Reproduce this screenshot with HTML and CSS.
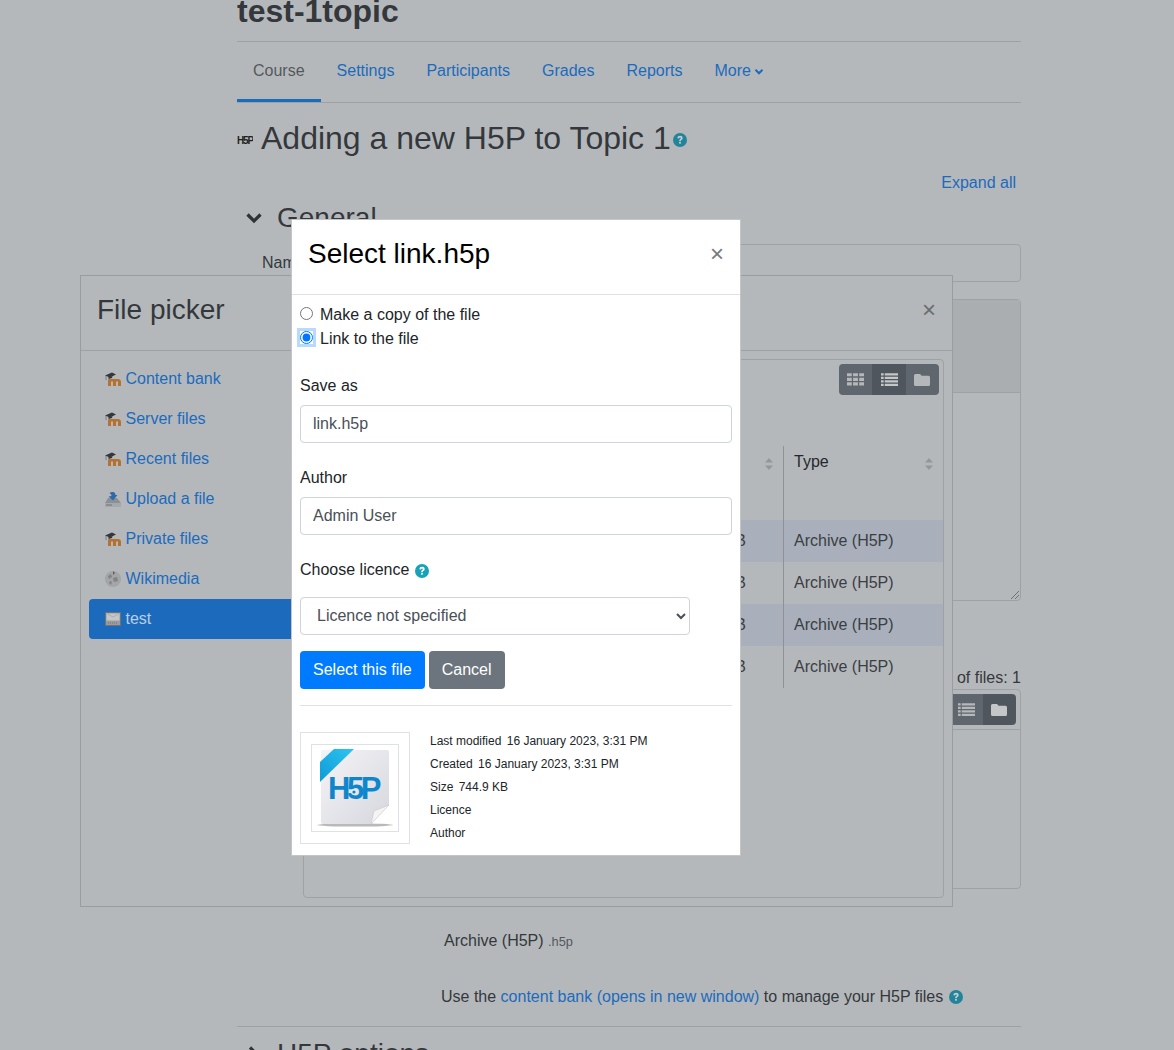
FILE: index.html
```html
<!DOCTYPE html>
<html>
  <head>
    <title>Adding a new H5P to Topic 1</title>
    <meta name="viewport" content="width=device-width, initial-scale=1" />
    <link rel="stylesheet" href="styles.css">
  </head>
  <body>
    <svg class="defs" width="0" height="0">
      <symbol id="moodle" viewBox="0 0 16 16">
        <path d="M0 4.5 L7 1.5 L11 3.6 L5 6.4 Z" fill="#33363a"/>
        <path d="M1 5 V9" stroke="#6d7074" stroke-width=".8"/>
        <path d="M3.5 6 V8 L7 7 L7.5 5.4 Z" fill="#33363a"/>
        <path d="M3 15 V9 Q3 8 5 8 H12.5 Q16 8 16 11 V15 H13 V10.5 H11 V15 H8 V10.5 H6 V15 Z" fill="#b5712f"/>
      </symbol>
      <symbol id="help" viewBox="0 0 16 16">
        <circle cx="8" cy="8" r="8" fill="currentColor"/>
        <path d="M4.9 6 Q5.1 3.2 8.1 3.2 Q11.1 3.2 11.1 5.7 Q11.1 7.2 9.6 8 Q9 8.4 9 9.2 H7 Q7 7.7 8 7 Q9 6.3 9 5.8 Q9 5 8 5 Q7.1 5 6.9 6.2 Z" fill="var(--q)"/>
        <rect x="7" y="10" width="2" height="2.2" fill="var(--q)"/>
      </symbol>
      <symbol id="grid" viewBox="0 0 16 14">
        <path d="M0 1h4.5v3H0zM5.7 1h4.6v3H5.7zM11.5 1H16v3h-4.5zM0 5.3h4.5v3H0zM5.7 5.3h4.6v3H5.7zM11.5 5.3H16v3h-4.5zM0 9.6h4.5v3H0zM5.7 9.6h4.6v3H5.7zM11.5 9.6H16v3h-4.5z" fill="currentColor"/>
      </symbol>
      <symbol id="list" viewBox="0 0 16 14">
        <path d="M0 1h2.5v2.2H0zM3.5 1H16v2.2H3.5zM0 4.3h2.5v2.2H0zM3.5 4.3H16v2.2H3.5zM0 7.6h2.5v2.2H0zM3.5 7.6H16v2.2H3.5zM0 10.9h2.5v2.2H0zM3.5 10.9H16v2.2H3.5z" fill="currentColor"/>
      </symbol>
      <symbol id="folder" viewBox="0 0 16 14">
        <path d="M1.5 1H6l1.6 1.8h6.9Q16 2.8 16 4.3v7.2Q16 13 14.5 13h-13Q0 13 0 11.5v-9Q0 1 1.5 1Z" fill="currentColor"/>
      </symbol>
      <symbol id="sort" viewBox="0 0 8 12">
        <path d="M4 0 L8 4.6 H0 Z M4 12 L0 7.4 H8 Z" fill="currentColor"/>
      </symbol>
    </svg>

    <div class="page">
      <h1 class="course-title">test-1topic</h1>
      <nav class="tabs">
        <a class="tab active">Course</a>
        <a class="tab">Settings</a>
        <a class="tab">Participants</a>
        <a class="tab">Grades</a>
        <a class="tab">Reports</a>
        <a class="tab">More <svg class="caret" viewBox="0 0 10 8" width="10" height="8"><path d="M1.5 1.8 L5 5.3 L8.5 1.8" fill="none" stroke="currentColor" stroke-width="2"/></svg></a>
      </nav>
      <div class="page-heading">
        <svg class="h5p-mini" width="16" height="12" viewBox="0 0 16 12"><text x="0" y="10">H5P</text></svg>
        <h2>Adding a new H5P to Topic 1</h2>
        <svg class="help teal" width="14" height="14"><use href="#help"/></svg>
      </div>
      <div class="expand-all"><a>Expand all</a></div>
      <div class="section-head">
        <svg width="18" height="12" viewBox="0 0 18 12"><path d="M2.5 2.5 L9 9 L15.5 2.5" fill="none" stroke="#2f3337" stroke-width="3.2"/></svg>
        <h3>General</h3>
      </div>
      <div class="name-row">
        <span class="name-label">Name</span>
        <div class="name-field"></div>
      </div>
      <div class="editor-box">
        <div class="editor-top"></div>
        <svg class="resize" width="10" height="10" viewBox="0 0 10 10"><path d="M1 9 L9 1 M5 9 L9 5" stroke="#6d7074" stroke-width="1"/></svg>
      </div>
      <div class="files-count">Maximum number of files: 1</div>
      <div class="manager-box">
        <div class="manager-top">
          <div class="btn-group">
            <span class="view-btn"><svg width="17" height="15"><use href="#grid"/></svg></span>
            <span class="view-btn"><svg width="17" height="15"><use href="#list"/></svg></span>
            <span class="view-btn on"><svg width="16" height="14"><use href="#folder"/></svg></span>
          </div>
        </div>
      </div>
      <div class="types-label">Accepted file types:</div>
      <div class="accepted">Archive (H5P) <small>.h5p</small></div>
      <div class="bank-note">
        <span>Use the <a>content bank (opens in new window)</a> to manage your H5P files</span>
        <svg class="help teal" width="14" height="14"><use href="#help"/></svg>
      </div>
      <div class="section-head closed">
        <svg width="18" height="18" viewBox="0 0 18 18"><path d="M5 2.5 L11.5 9 L5 15.5" fill="none" stroke="#2f3337" stroke-width="3.2"/></svg>
        <h3>H5P options</h3>
      </div>
    </div>

    <div class="picker">
      <div class="picker-head">
        <h4>File picker</h4>
        <span class="close dim">&times;</span>
      </div>
      <div class="picker-body">
        <ul class="repos">
          <li><svg width="16" height="16"><use href="#moodle"/></svg><a>Content bank</a></li>
          <li><svg width="16" height="16"><use href="#moodle"/></svg><a>Server files</a></li>
          <li><svg width="16" height="16"><use href="#moodle"/></svg><a>Recent files</a></li>
          <li>
            <svg width="16" height="16" viewBox="0 0 16 16">
              <path d="M3 7 H12 L16 12 V16 H0 V12 Z" fill="#8b9096"/>
              <path d="M0 12 H16 V16 H0 Z" fill="#a6a9ac"/>
              <path d="M1 14 H7" stroke="#6f7275"/>
              <path d="M4.5 2 Q6 .5 8.5 1 Q10.5 1.5 10.5 4 L12.5 4 L8 9.5 L3.5 5.5 L6.5 5 Q6.5 3 4.5 2 Z" fill="#2f6aa8"/>
            </svg><a>Upload a file</a>
          </li>
          <li><svg width="16" height="16"><use href="#moodle"/></svg><a>Private files</a></li>
          <li>
            <svg width="16" height="16" viewBox="0 0 16 16">
              <circle cx="8" cy="8" r="8" fill="#a3a5a7"/>
              <path d="M3 5 L6 3 L7 6 L4 8 Z M8 7 L12 6 L13 10 L9 11 Z M5 10 L7 11 L6 14 L4 12 Z" fill="#818386"/>
              <path d="M8 0 L10 2 L8 4 Z" fill="#5d6063"/>
            </svg><a>Wikimedia</a>
          </li>
          <li class="active">
            <svg width="16" height="16" viewBox="0 0 16 16">
              <rect x=".5" y="1.5" width="15" height="13" fill="#9a9da0" stroke="#6f7275"/>
              <rect x="1.5" y="2.5" width="13" height="7" fill="#c4c6c8"/>
              <path d="M1.5 2.5 L8 6 L14.5 2.5" fill="none" stroke="#adb0b2"/>
              <path d="M3 12 H13" stroke="#6f7275" stroke-dasharray="1 1"/>
            </svg><a>test</a>
          </li>
        </ul>
        <div class="file-panel">
          <div class="panel-top">
            <div class="btn-group">
              <span class="view-btn"><svg width="17" height="15"><use href="#grid"/></svg></span>
              <span class="view-btn on"><svg width="17" height="15"><use href="#list"/></svg></span>
              <span class="view-btn"><svg width="16" height="14"><use href="#folder"/></svg></span>
            </div>
          </div>
          <table class="files">
            <thead>
              <tr>
                <th class="col-name">Name</th>
                <th class="col-size">Size<svg class="sort" width="8" height="12"><use href="#sort"/></svg></th>
                <th class="col-type">Type<svg class="sort" width="8" height="12"><use href="#sort"/></svg></th>
              </tr>
            </thead>
            <tbody>
              <tr class="odd"><td>link.h5p</td><td>744.9 KB</td><td class="col-type">Archive (H5P)</td></tr>
              <tr><td>quiz.h5p</td><td>744.9 KB</td><td class="col-type">Archive (H5P)</td></tr>
              <tr class="odd"><td>course.h5p</td><td>744.9 KB</td><td class="col-type">Archive (H5P)</td></tr>
              <tr><td>video.h5p</td><td>744.9 KB</td><td class="col-type">Archive (H5P)</td></tr>
            </tbody>
          </table>
        </div>
      </div>
    </div>

    <div class="dialog">
      <div class="dialog-head">
        <h4>Select link.h5p</h4>
        <span class="close">&times;</span>
      </div>
      <div class="dialog-body">
        <label class="radio-line"><input type="radio" name="mode"> Make a copy of the file</label>
        <label class="radio-line focus"><input type="radio" name="mode" checked> Link to the file</label>
        <label class="field-label first">Save as</label>
        <input class="text-input" type="text" value="link.h5p">
        <label class="field-label">Author</label>
        <input class="text-input" type="text" value="Admin User">
        <label class="field-label licence">Choose licence
          <svg class="help teal-bright" width="14" height="14"><use href="#help"/></svg>
        </label>
        <select class="licence-select"><option>Licence not specified</option></select>
        <div class="actions">
          <button class="btn primary">Select this file</button>
          <button class="btn secondary">Cancel</button>
        </div>
        <div class="preview">
          <div class="thumb">
            <div class="thumb-inner">
              <svg width="86" height="86" viewBox="0 0 86 86">
                <defs>
                  <linearGradient id="sheet" x1="0" y1="0" x2="1" y2="1">
                    <stop offset="0" stop-color="#f4f4f8"/>
                    <stop offset="1" stop-color="#d6d7dd"/>
                  </linearGradient>
                  <linearGradient id="ribbon" x1="0" y1="1" x2="1" y2="0">
                    <stop offset="0" stop-color="#0f9ad6"/>
                    <stop offset="1" stop-color="#2cc5f2"/>
                  </linearGradient>
                </defs>
                <ellipse cx="43" cy="80" rx="38" ry="1.6" fill="#b9b9b9"/>
                <path d="M11 5 H75 Q77 5 77 7 V60 L59 79 H11 Q9 79 9 77 V7 Q9 5 11 5 Z" fill="url(#sheet)"/>
                <path d="M8 17 L22 4 H42 L8 37 Z" fill="url(#ribbon)"/>
                <text class="h5p-logo" x="16" y="54">H5P</text>
                <circle cx="42" cy="47" r="3" fill="#e9e9ee"/>
                <circle cx="42" cy="47" r="1.6" fill="#0f86cb"/>
                <path d="M59 79 L62 66 L77 60 Z" fill="#f4f4f4" stroke="#c9cacc" stroke-width=".6"/>
              </svg>
            </div>
          </div>
          <div class="details">
            <div><span>Last modified</span> 16 January 2023, 3:31 PM</div>
            <div><span>Created</span> 16 January 2023, 3:31 PM</div>
            <div><span>Size</span> 744.9 KB</div>
            <div><span>Licence</span></div>
            <div><span>Author</span></div>
          </div>
        </div>
      </div>
    </div>
  </body>
</html>
```

FILE: styles.css
```css
html,
body {
  margin: 0;
  height: 1050px;
  overflow: hidden;
}
body {
  position: relative;
  font-family: "Liberation Sans", Arial, sans-serif;
  font-size: 16px;
  line-height: 24px;
  background-color: #b5b8bb;
  color: #34383c;
}
a {
  color: #1b6bbd;
}
h1,
h2,
h3,
h4 {
  margin: 0;
  font-weight: normal;
}
.defs {
  position: absolute;
}

/* page behind the dialogs */
.page {
  width: 784px;
  margin-left: 237px;
}
.course-title {
  height: 50px;
  margin-top: -8px;
  box-sizing: border-box;
  font-size: 32px;
  line-height: 38px;
  font-weight: bold;
  border-bottom: 1px solid #9fa2a5;
}
.tabs {
  display: flex;
  height: 60px;
  border-bottom: 1px solid #9fa2a5;
}
.tab {
  padding: 17px 16px 0;
  height: 43px;
}
.tab.active {
  color: #53585d;
  border-bottom: 3px solid #1b6bbd;
  height: 40px;
}
.caret {
  vertical-align: 0;
  margin-left: -1px;
}
.page-heading {
  display: flex;
  align-items: center;
  height: 38px;
  margin-top: 16px;
}
.h5p-mini {
  margin-right: 8px;
  margin-top: 4px;
}
.h5p-mini text {
  font-size: 10px;
  font-weight: bold;
  letter-spacing: -1.2px;
  fill: #1d1f21;
}
.page-heading h2 {
  font-size: 32px;
  line-height: 38px;
}
.help {
  flex: none;
  --q: #c3cdd0;
}
.teal {
  color: #22849a;
}
.page-heading .help {
  margin: 4px 0 0 2px;
}
.expand-all {
  text-align: right;
  padding-right: 5px;
  margin-top: 14px;
}
.section-head {
  display: flex;
  align-items: center;
  height: 34px;
  margin-top: 6px;
  padding-left: 8px;
}
.section-head h3 {
  font-size: 28px;
  line-height: 34px;
  margin-left: 14px;
}
.name-row {
  display: flex;
  align-items: center;
  margin-top: 9px;
  padding-left: 25px;
  height: 38px;
}
.name-field {
  margin-left: 150px;
  flex: 1;
  height: 36px;
  border: 1px solid #9fa2a5;
  border-radius: 4px;
}
.editor-box {
  position: relative;
  height: 300px;
  margin: 17px 0 0 213px;
  border: 1px solid #9fa2a5;
  border-radius: 4px;
}
.editor-top {
  height: 92px;
  background-color: #abaeb1;
  border-bottom: 1px solid #9fa2a5;
}
.resize {
  position: absolute;
  right: 0;
  bottom: 0;
}
.files-count {
  text-align: right;
  margin-top: 65px;
  height: 23px;
}
.manager-box {
  height: 198px;
  margin: 0 0 0 213px;
  border: 1px solid #9fa2a5;
  border-radius: 4px;
}
.manager-top {
  display: flex;
  justify-content: flex-end;
  padding: 4px 4px 0;
  height: 35px;
  border-bottom: 1px solid #9fa2a5;
}
.types-label {
  margin: -2px 0 0 204px;
}
.accepted {
  margin: 18px 0 0 207px;
}
.accepted small {
  font-size: 12.8px;
  color: #53585d;
}
.bank-note {
  display: flex;
  align-items: center;
  margin: 31px 0 0 204px;
  height: 24px;
}
.bank-note .help {
  margin-left: 6px;
}
.section-head.closed {
  margin-top: 17px;
  padding-top: 10px;
  border-top: 1px solid #9fa2a5;
}

/* view switch buttons, used twice */
.btn-group {
  display: flex;
  height: 31px;
  border-radius: 4px;
  overflow: hidden;
}
.view-btn {
  display: flex;
  align-items: center;
  justify-content: center;
  width: 33.3px;
  background-color: #5f666d;
  color: #b5b8bb;
}
.view-btn.on {
  background-color: #4f565d;
  color: #c4c6c8;
}

/* file picker window */
.picker {
  position: absolute;
  left: 80px;
  top: 275px;
  width: 873px;
  height: 632px;
  box-sizing: border-box;
  background-color: #b5b8bb;
  border: 1px solid #9a9da0;
}
.picker-head {
  display: flex;
  justify-content: space-between;
  align-items: center;
  height: 68px;
  padding: 0 16px 6px;
  border-bottom: 1px solid #9fa2a5;
}
.picker-head h4 {
  font-size: 28px;
  color: #34383c;
}
.close {
  font-size: 24px;
  font-weight: normal;
  color: #6b6e71;
}
.picker-body {
  display: flex;
  padding: 8px;
  height: 539px;
}
.repos {
  width: 214px;
  margin: 0;
  padding: 0;
  list-style: none;
}
.repos li {
  display: flex;
  align-items: center;
  height: 40px;
  padding-left: 16px;
  border-radius: 4px;
}
.repos li a {
  margin-left: 4.5px;
}
.repos li.active {
  background-color: #1c6abb;
}
.repos li.active a {
  color: #b8cfe6;
}
.file-panel {
  flex: 1;
  border: 1px solid #9fa2a5;
  border-radius: 4px;
}
.panel-top {
  display: flex;
  justify-content: flex-end;
  padding: 4px 4px 0;
  height: 82px;
}
.files {
  width: 639px;
  border-collapse: separate;
  border-spacing: 0;
  table-layout: fixed;
}
.files th {
  position: relative;
  height: 74px;
  box-sizing: border-box;
  padding: 4px 10px 0;
  text-align: left;
  vertical-align: top;
  font-weight: normal;
  color: #25282b;
}
.files td {
  height: 42px;
  padding: 0 10px;
  box-sizing: border-box;
  color: #3a3f44;
}
.col-name {
  width: 366px;
}
.col-size {
  width: 113px;
}
.files .col-type {
  width: 160px;
  border-left: 1px solid #8f9295;
}
.files tr.odd td {
  background-color: #a9b0bb;
}
.sort {
  position: absolute;
  right: 10px;
  top: 12px;
  color: #94979a;
}

/* select file dialog */
.dialog {
  position: absolute;
  left: 291px;
  top: 219px;
  width: 450px;
  height: 637px;
  box-sizing: border-box;
  background-color: #ffffff;
  border: 1px solid #c3c5c7;
  color: #212529;
}
.dialog-head {
  display: flex;
  justify-content: space-between;
  align-items: center;
  height: 68px;
  padding: 0 16px 6px;
  border-bottom: 1px solid #dee2e6;
}
.dialog-head h4 {
  font-size: 28px;
  color: #000000;
}
.dialog-head .close {
  color: #777a7d;
}
.dialog-body {
  padding: 8px 8px 0;
}
.radio-line {
  display: flex;
  align-items: center;
  height: 24px;
}
.radio-line input {
  width: 13px;
  height: 13px;
  margin: 0 7px 3px 0;
}
.radio-line.focus input {
  outline: 3px solid #b8daff;
}
.field-label {
  display: block;
  margin-top: 23px;
  height: 31px;
  line-height: 24px;
}
.field-label.licence {
  display: flex;
  align-items: flex-start;
  height: 39px;
}
.field-label.licence .help {
  margin: 6px 0 0 6px;
  --q: #ffffff;
}
.teal-bright {
  color: #17a2b8;
}
.text-input {
  display: block;
  width: 432px;
  height: 38px;
  box-sizing: border-box;
  padding: 6px 12px;
  font: inherit;
  color: #495057;
  border: 1px solid #ced4da;
  border-radius: 4px;
}
.licence-select {
  display: block;
  width: 390px;
  height: 38px;
  padding: 5px 12px 7px;
  font: inherit;
  color: #495057;
  background-color: #ffffff;
  border: 1px solid #ced4da;
  border-radius: 4px;
}
.actions {
  display: flex;
  gap: 4px;
  margin-top: 16px;
  padding-bottom: 16px;
  width: 432px;
  border-bottom: 1px solid #dee2e6;
}
.btn {
  height: 38px;
  padding: 0 13px;
  font: inherit;
  color: #ffffff;
  border: 0;
  border-radius: 4px;
}
.btn.primary {
  background-color: #007bff;
}
.btn.secondary {
  background-color: #6c757d;
}
.preview {
  display: flex;
  margin-top: 26px;
}
.thumb {
  display: flex;
  align-items: center;
  justify-content: center;
  width: 110px;
  height: 112px;
  box-sizing: border-box;
  border: 1px solid #dee2e6;
}
.thumb-inner {
  width: 88px;
  height: 88px;
  box-sizing: border-box;
  border: 1px solid #dee2e6;
}
.thumb-inner svg {
  display: block;
}
.h5p-logo {
  font-family: "Liberation Sans", Arial, sans-serif;
  font-size: 31px;
  font-weight: bold;
  letter-spacing: -3.5px;
  fill: #0f86cb;
}
.details {
  margin-left: 20px;
  font-size: 12px;
  line-height: 23px;
  margin-top: -2px;
}
.details span {
  margin-right: 2px;
}
```
